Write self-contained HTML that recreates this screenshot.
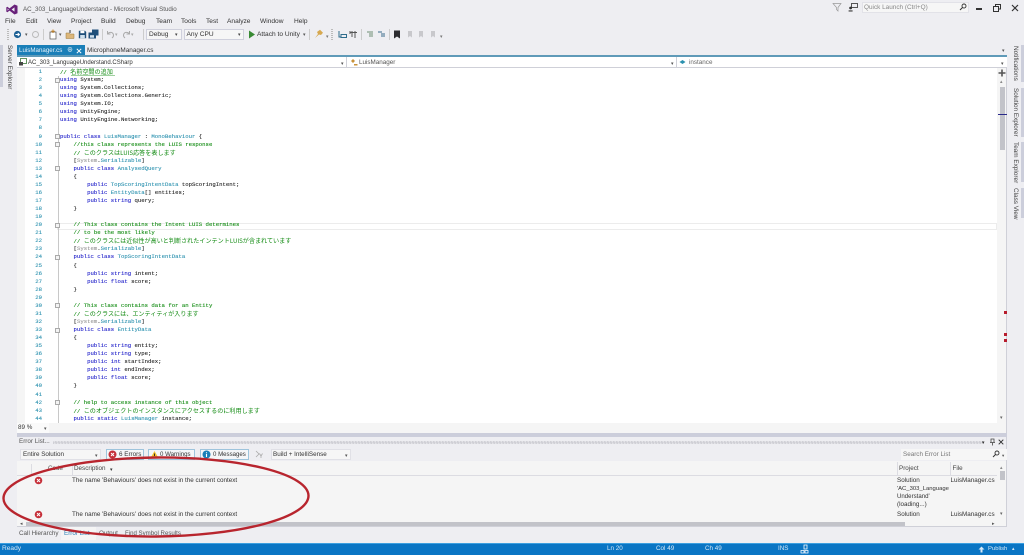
<!DOCTYPE html>
<html><head><meta charset="utf-8"><style>
*{box-sizing:border-box}
html,body{margin:0;padding:0;width:1024px;height:555px;overflow:hidden;background:#eeeef2}
#r{position:absolute;left:0;top:0;width:1024px;height:555px;overflow:hidden;background:#eeeef2;font-family:"Liberation Sans","Noto Sans CJK JP",sans-serif;font-size:6.3px;color:#333;filter:blur(.38px)}
.t{position:absolute;white-space:nowrap;line-height:12px}
.m{font-size:6.6px}
.b{position:absolute}
.v{position:absolute;white-space:nowrap;writing-mode:vertical-rl;font-size:6.4px;color:#444;line-height:10px}
#code{position:absolute;left:0;top:68px;width:997px;font-family:"Liberation Mono","Noto Sans CJK JP",monospace;font-size:5.65px;color:#222;-webkit-text-stroke:.1px}
.l{position:relative;height:8.07px;line-height:8px;white-space:pre;padding-left:60px}
.l i{position:absolute;left:22px;width:20px;text-align:right;font-style:normal;color:#2b91af}
.k{color:#1a1ac8}.c{color:#108a10}.y{color:#2b91af}.g{color:#999}
.j{font-family:"Noto Sans CJK JP",sans-serif;font-size:6.1px;color:#108a10;-webkit-text-stroke:0}
.f{position:absolute;left:55px;width:5px;height:5px;border:.6px solid #aaa;background:#f4f4f4}
.tb{position:absolute;background:#f6f6f6;border:1px solid #cfd0dc;height:11px}
.btn{position:absolute;top:449px;height:11px;border:1px solid #9ec4dc;background:#f5f6f8}
</style></head><body><div id="r">

<!-- title -->
<svg class="b" style="left:6px;top:4px" width="12" height="11" viewBox="0 0 12 11"><path d="M8.5 0.5 L11.5 1.8 V9.2 L8.5 10.5 L3.5 6.6 L1.4 8.2 L0.3 7.6 V3.4 L1.4 2.8 L3.5 4.4 Z M8.5 3.4 L5.6 5.5 L8.5 7.6 Z M1.6 4.4 V6.6 L2.8 5.5 Z" fill="#68217a" fill-rule="evenodd"/></svg>
<div class="t" style="left:23px;top:3.500px;color:#555;font-size:6.2px">AC_303_LanguageUnderstand - Microsoft Visual Studio</div>
<svg class="b" style="left:832px;top:2px" width="10" height="10" viewBox="0 0 10 10"><path d="M1 1.5H9L6 5.500V9L4.500 7.500V5.500Z" fill="none" stroke="#999" stroke-width=".7"/></svg>
<svg class="b" style="left:848px;top:2px" width="10" height="10" viewBox="0 0 10 10"><rect x="3.500" y="1.500" width="6" height="4" fill="none" stroke="#444" stroke-width=".9"/><circle cx="2.600" cy="6" r="1.400" fill="#333"/><path d="M.6 9.500V8.400H4.600V9.500Z" fill="#333"/></svg>
<div class="b" style="left:862px;top:2px;width:107px;height:11px;background:#f6f6f6;border:1px solid #e2e2e8"></div>
<div class="t" style="left:864px;top:1.500px;color:#888;font-size:6.4px">Quick Launch (Ctrl+Q)</div>
<svg class="b" style="left:959px;top:3px" width="8" height="8" viewBox="0 0 8 8"><circle cx="5" cy="3" r="2" fill="none" stroke="#333" stroke-width=".9"/><path d="M3.500 4.500L1 7" stroke="#333" stroke-width="1"/></svg>
<div class="b" style="left:976px;top:8px;width:6px;height:1.600px;background:#333"></div>
<svg class="b" style="left:993px;top:4px" width="8" height="8" viewBox="0 0 8 8"><path d="M2.500 2.500V.5H7.500V5H5.500M.5 2.500H5.500V7.500H.5Z" fill="none" stroke="#333"/></svg>
<svg class="b" style="left:1011px;top:4px" width="8" height="8" viewBox="0 0 8 8"><path d="M1 1L7 7M7 1L1 7" stroke="#333" stroke-width="1.200"/></svg>

<!-- menu -->
<div class="t m" style="left:5px;top:16px">File</div>
<div class="t m" style="left:26px;top:16px">Edit</div>
<div class="t m" style="left:47px;top:16px">View</div>
<div class="t m" style="left:71px;top:16px">Project</div>
<div class="t m" style="left:101px;top:16px">Build</div>
<div class="t m" style="left:126px;top:16px">Debug</div>
<div class="t m" style="left:156px;top:16px">Team</div>
<div class="t m" style="left:181px;top:16px">Tools</div>
<div class="t m" style="left:206px;top:16px">Test</div>
<div class="t m" style="left:227px;top:16px">Analyze</div>
<div class="t m" style="left:260px;top:16px">Window</div>
<div class="t m" style="left:294px;top:16px">Help</div>

<!-- toolbar -->
<div class="b" style="left:7px;top:29px;width:2px;height:11px;background:repeating-linear-gradient(#bbb 0 1px,transparent 1px 2px)"></div>
<svg class="b" style="left:13px;top:30px" width="9" height="9" viewBox="0 0 9 9"><circle cx="4.500" cy="4.500" r="3.600" fill="#1c5f94"/><path d="M2.500 4.500H6.500M4.700 3L6.500 4.500L4.700 6" stroke="#fff" fill="none" stroke-width=".9"/></svg>
<div class="t" style="left:25px;top:29px;font-size:5px;color:#555">▾</div>
<svg class="b" style="left:31px;top:30px" width="9" height="9" viewBox="0 0 9 9"><circle cx="4.500" cy="4.500" r="3" fill="none" stroke="#bbb"/></svg>
<div class="b" style="left:43px;top:29px;width:1px;height:11px;background:#ccc"></div>
<svg class="b" style="left:48px;top:29px" width="10" height="11" viewBox="0 0 10 11"><rect x="2" y="3" width="6" height="7" fill="#fff" stroke="#555" stroke-width=".7"/><path d="M5 .5V4M3.200 2.200H6.800" stroke="#c27d1a" stroke-width=".9"/></svg>
<div class="t" style="left:59px;top:29px;font-size:5px;color:#555">▾</div>
<svg class="b" style="left:65px;top:29px" width="10" height="11" viewBox="0 0 10 11"><path d="M1 4H4L5 5H9V9.500H1Z" fill="#dcb67a" stroke="#9a7a3a" stroke-width=".5"/><path d="M5 1V4" stroke="#333"/></svg>
<svg class="b" style="left:78px;top:30px" width="9" height="9" viewBox="0 0 9 9"><path d="M.8.8H7L8.200 2V8.200H.8Z" fill="#1e4e79"/><rect x="2.400" y=".8" width="4" height="2.400" fill="#fff"/><rect x="2.200" y="5" width="4.600" height="3.200" fill="#cfe0ee"/></svg>
<svg class="b" style="left:88px;top:29px" width="11" height="10" viewBox="0 0 11 10"><path d="M4 .5H10.500V6.500H8V9.500H.5V3.500H4Z" fill="#1e4e79"/><rect x="2" y="6.200" width="4" height="2.500" fill="#cfe0ee"/></svg>
<div class="b" style="left:102px;top:29px;width:1px;height:11px;background:#ccc"></div>
<svg class="b" style="left:106px;top:30px" width="9" height="9" viewBox="0 0 9 9"><path d="M1.500 1V4H4.500M1.800 3.800C3.500 1.500 7 2 7.500 5C7.600 6.200 7 7.200 6 8" fill="none" stroke="#aaa"/></svg>
<div class="t" style="left:115px;top:29px;font-size:5px;color:#aaa">▾</div>
<svg class="b" style="left:122px;top:30px" width="9" height="9" viewBox="0 0 9 9"><path d="M7.500 1V4H4.500M7.200 3.800C5.500 1.500 2 2 1.500 5C1.400 6.200 2 7.200 3 8" fill="none" stroke="#aaa"/></svg>
<div class="t" style="left:131px;top:29px;font-size:5px;color:#aaa">▾</div>
<div class="b" style="left:143px;top:29px;width:1px;height:11px;background:#ccc"></div>
<div class="tb" style="left:146px;top:29px;width:36px"></div>
<div class="t m" style="left:149px;top:28.500px">Debug</div>
<div class="t" style="left:175px;top:29px;font-size:5px;color:#444">▾</div>
<div class="tb" style="left:184px;top:29px;width:60px"></div>
<div class="t m" style="left:186.500px;top:28.500px">Any CPU</div>
<div class="t" style="left:238px;top:29px;font-size:5px;color:#444">▾</div>
<svg class="b" style="left:248px;top:30px" width="8" height="9" viewBox="0 0 8 9"><path d="M1 .5L7 4.500L1 8.500Z" fill="#388a34"/></svg>
<div class="t m" style="left:257px;top:28.500px">Attach to Unity</div>
<div class="t" style="left:303px;top:29px;font-size:5px;color:#555">▾</div>
<div class="b" style="left:309px;top:29px;width:1px;height:11px;background:#ccc"></div>
<svg class="b" style="left:314px;top:29px" width="10" height="10" viewBox="0 0 10 10"><path d="M1 9L4 5L3 3L6 .8L9 3.800L7 6L5 5.500Z" fill="#d6a84f"/></svg>
<div class="t" style="left:326px;top:31px;font-size:5px;color:#777">▾</div>
<div class="b" style="left:331px;top:29px;width:2px;height:11px;background:repeating-linear-gradient(#bbb 0 1px,transparent 1px 2px)"></div>
<svg class="b" style="left:338px;top:30px" width="9" height="9" viewBox="0 0 9 9"><path d="M1 1V7H3M3 4.500H8.500V7.500H3Z" fill="none" stroke="#2e6c8c"/></svg>
<svg class="b" style="left:349px;top:30px" width="9" height="9" viewBox="0 0 9 9"><path d="M1 2.500H8M3 1V7M6 1V8M1 1V4" fill="none" stroke="#555" stroke-width="1"/></svg>
<div class="b" style="left:361px;top:29px;width:1px;height:11px;background:#ccc"></div>
<svg class="b" style="left:366px;top:30px" width="9" height="9" viewBox="0 0 9 9"><path d="M1 2H7M3 4H7M3 6H7" stroke="#6e8e74"/></svg>
<svg class="b" style="left:377px;top:30px" width="9" height="9" viewBox="0 0 9 9"><path d="M1 2H5M4 4H8M4 6H8" stroke="#3a6a8a"/></svg>
<div class="b" style="left:389px;top:29px;width:1px;height:11px;background:#ccc"></div>
<svg class="b" style="left:393px;top:30px" width="8" height="9" viewBox="0 0 8 9"><path d="M1 .5H7V8.500L4 6.500L1 8.500Z" fill="#2c2c30"/></svg>
<svg class="b" style="left:405px;top:30px" width="8" height="9" viewBox="0 0 8 9"><path d="M3 1H7V7.500L5 6L3 7.500ZM1 3H3" fill="#c8c8cc"/></svg>
<svg class="b" style="left:416px;top:30px" width="8" height="9" viewBox="0 0 8 9"><path d="M3 1H7V7.500L5 6L3 7.500ZM1 3H3" fill="#c8c8cc"/></svg>
<svg class="b" style="left:428px;top:30px" width="8" height="9" viewBox="0 0 8 9"><path d="M3 1H7V7.500L5 6L3 7.500ZM1 3H3" fill="#c8c8cc"/></svg>
<div class="t" style="left:440px;top:31px;font-size:5px;color:#777">▾</div>

<!-- left strip -->
<div class="b" style="left:0;top:45px;width:3px;height:42px;background:#cccedb"></div>
<div class="v" style="left:4px;top:45px">Server Explorer</div>

<!-- tabs -->
<div class="b" style="left:17px;top:45px;width:68px;height:11px;background:#1a7fb8"></div>
<div class="t" style="left:19px;top:44.500px;color:#e8f3fa;font-size:6.2px">LuisManager.cs</div>
<div class="t" style="left:67px;top:44.500px;color:#fff;font-size:6px">⊕</div>
<svg class="b" style="left:76px;top:48px" width="6" height="6" viewBox="0 0 6 6"><path d="M.8.8L5.200 5.200M5.200.8L.8 5.200" stroke="#fff"/></svg>
<div class="t" style="left:87px;top:44.500px;color:#333;font-size:6.4px">MicrophoneManager.cs</div>
<div class="t" style="left:1002px;top:45px;font-size:5px;color:#555">▾</div>
<div class="b" style="left:17px;top:55px;width:990px;height:2px;background:#5f9ab8"></div>

<!-- nav bar -->
<div class="b" style="left:17px;top:57px;width:990px;height:11px;background:#fff;border-bottom:1px solid #cfd0d8"></div>
<svg class="b" style="left:19px;top:58px" width="8" height="8" viewBox="0 0 8 8"><rect x="1.500" y=".5" width="6" height="5" fill="#fff" stroke="#3a7a3a" stroke-width=".8"/><rect y="4" width="4" height="3.500" fill="#444"/></svg>
<div class="t" style="left:28px;top:56.500px;font-size:6px">AC_303_LanguageUnderstand.CSharp</div>
<div class="t" style="left:341px;top:58px;font-size:5px;color:#555">▾</div>
<div class="b" style="left:346px;top:57px;width:1px;height:11px;background:#cfd0d8"></div>
<svg class="b" style="left:350px;top:58px" width="8" height="8" viewBox="0 0 8 8"><path d="M1 3L3 1L5 3L3 5ZM4 6H7.500V7.500H4Z" fill="#c8923a"/></svg>
<div class="t" style="left:359px;top:56.500px;color:#555">LuisManager</div>
<div class="t" style="left:671px;top:58px;font-size:5px;color:#555">▾</div>
<div class="b" style="left:676px;top:57px;width:1px;height:11px;background:#cfd0d8"></div>
<svg class="b" style="left:679px;top:58px" width="7" height="8" viewBox="0 0 7 8"><path d="M.5 4L3.500 2L6.500 4L3.500 6Z" fill="#2b91af"/></svg>
<div class="t" style="left:689px;top:56.500px;color:#666">instance</div>
<div class="t" style="left:1001px;top:58px;font-size:5px;color:#555">▾</div>

<!-- editor -->
<div class="b" style="left:17px;top:68px;width:8px;height:355px;background:#f5f5f5"></div>
<div class="b" style="left:25px;top:68px;width:972px;height:355px;background:#fff"></div>
<div class="b" style="left:57px;top:222.500px;width:940px;height:7px;border:1px solid #ececec"></div>
<div class="b" style="left:71px;top:74.500px;width:44px;height:1px;background:#9fd09f"></div>
<div class="b" style="left:57.500px;top:76px;width:.6px;height:347px;background:#c8c8c8"></div>
<div class="f" style="top:77.500px"></div><div class="f" style="top:134px"></div><div class="f" style="top:142px"></div><div class="f" style="top:166px"></div><div class="f" style="top:223px"></div><div class="f" style="top:255px"></div><div class="f" style="top:303px"></div><div class="f" style="top:328px"></div><div class="f" style="top:400px"></div>

<div id="code">
<div class="l"><i>1</i><span class="c">// </span><span class="j">名前空間の追加</span></div>
<div class="l"><i>2</i><span class="k">using</span> System;</div>
<div class="l"><i>3</i><span class="k">using</span> System.Collections;</div>
<div class="l"><i>4</i><span class="k">using</span> System.Collections.Generic;</div>
<div class="l"><i>5</i><span class="k">using</span> System.IO;</div>
<div class="l"><i>6</i><span class="k">using</span> UnityEngine;</div>
<div class="l"><i>7</i><span class="k">using</span> UnityEngine.Networking;</div>
<div class="l"><i>8</i></div>
<div class="l"><i>9</i><span class="k">public class</span> <span class="y">LuisManager</span> : <span class="y">MonoBehaviour</span> {</div>
<div class="l"><i>10</i>    <span class="c">//this class represents the LUIS response</span></div>
<div class="l"><i>11</i>    <span class="c">// </span><span class="j">このクラスはLUIS応答を表します</span></div>
<div class="l"><i>12</i>    [<span class="g">System</span>.<span class="y">Serializable</span>]</div>
<div class="l"><i>13</i>    <span class="k">public class</span> <span class="y">AnalysedQuery</span></div>
<div class="l"><i>14</i>    {</div>
<div class="l"><i>15</i>        <span class="k">public</span> <span class="y">TopScoringIntentData</span> topScoringIntent;</div>
<div class="l"><i>16</i>        <span class="k">public</span> <span class="y">EntityData</span>[] entities;</div>
<div class="l"><i>17</i>        <span class="k">public string</span> query;</div>
<div class="l"><i>18</i>    }</div>
<div class="l"><i>19</i></div>
<div class="l"><i>20</i>    <span class="c">// This class contains the Intent LUIS determines</span></div>
<div class="l"><i>21</i>    <span class="c">// to be the most likely</span></div>
<div class="l"><i>22</i>    <span class="c">// </span><span class="j">このクラスには近似性が高いと判断されたインテントLUISが含まれています</span></div>
<div class="l"><i>23</i>    [<span class="g">System</span>.<span class="y">Serializable</span>]</div>
<div class="l"><i>24</i>    <span class="k">public class</span> <span class="y">TopScoringIntentData</span></div>
<div class="l"><i>25</i>    {</div>
<div class="l"><i>26</i>        <span class="k">public string</span> intent;</div>
<div class="l"><i>27</i>        <span class="k">public float</span> score;</div>
<div class="l"><i>28</i>    }</div>
<div class="l"><i>29</i></div>
<div class="l"><i>30</i>    <span class="c">// This class contains data for an Entity</span></div>
<div class="l"><i>31</i>    <span class="c">// </span><span class="j">このクラスには、エンティティが入ります</span></div>
<div class="l"><i>32</i>    [<span class="g">System</span>.<span class="y">Serializable</span>]</div>
<div class="l"><i>33</i>    <span class="k">public class</span> <span class="y">EntityData</span></div>
<div class="l"><i>34</i>    {</div>
<div class="l"><i>35</i>        <span class="k">public string</span> entity;</div>
<div class="l"><i>36</i>        <span class="k">public string</span> type;</div>
<div class="l"><i>37</i>        <span class="k">public int</span> startIndex;</div>
<div class="l"><i>38</i>        <span class="k">public int</span> endIndex;</div>
<div class="l"><i>39</i>        <span class="k">public float</span> score;</div>
<div class="l"><i>40</i>    }</div>
<div class="l"><i>41</i></div>
<div class="l"><i>42</i>    <span class="c">// help to access instance of this object</span></div>
<div class="l"><i>43</i>    <span class="c">// </span><span class="j">このオブジェクトのインスタンスにアクセスするのに利用します</span></div>
<div class="l"><i>44</i>    <span class="k">public static</span> <span class="y">LuisManager</span> instance;</div>
</div>

<!-- zoom bar -->
<div class="b" style="left:17px;top:423px;width:980px;height:10px;background:#f5f5f5"></div>
<div class="b" style="left:17px;top:423px;width:32px;height:10px;background:#fafafa"></div>
<div class="t" style="left:18px;top:422px">89 %</div>
<div class="t" style="left:44px;top:423px;font-size:5px;color:#555">▾</div>

<!-- vertical scrollbar -->
<div class="b" style="left:997px;top:68px;width:10px;height:365px;background:#f5f5f5;border-right:1px solid #cfd0d8"></div>
<svg class="b" style="left:998px;top:69px" width="8" height="8" viewBox="0 0 8 8"><path d="M4 .5V7.500M.5 4H7.500" stroke="#555" stroke-width="1.600"/></svg>
<div class="t" style="left:1000px;top:76px;font-size:5px;color:#888">▴</div>
<div class="b" style="left:1000px;top:87px;width:5px;height:63px;background:#c2c3c9"></div>
<div class="b" style="left:998px;top:114px;width:9px;height:1.300px;background:#2a2a8a"></div>
<div class="b" style="left:1004px;top:311px;width:3px;height:3px;background:#b71c2c"></div>
<div class="b" style="left:1004px;top:333px;width:3px;height:3px;background:#b71c2c"></div>
<div class="b" style="left:1004px;top:339px;width:3px;height:3px;background:#b71c2c"></div>
<div class="t" style="left:1000px;top:412px;font-size:5px;color:#666">▾</div>

<!-- right strip -->
<div class="b" style="left:1021px;top:45px;width:3px;height:37px;background:#cccedb"></div>
<div class="b" style="left:1021px;top:88px;width:3px;height:49px;background:#cccedb"></div>
<div class="b" style="left:1021px;top:142px;width:3px;height:40px;background:#cccedb"></div>
<div class="b" style="left:1021px;top:188px;width:3px;height:30px;background:#cccedb"></div>
<div class="v" style="left:1010px;top:46px">Notifications</div>
<div class="v" style="left:1010px;top:88px">Solution Explorer</div>
<div class="v" style="left:1010px;top:142px">Team Explorer</div>
<div class="v" style="left:1010px;top:188px">Class View</div>

<!-- splitter / error list -->
<div class="b" style="left:17px;top:432.500px;width:990px;height:4.500px;background:#cccedb"></div>
<div class="b" style="left:17px;top:437px;width:990px;height:90px;background:#eeeef2;border-right:1px solid #cfd0d8"></div>
<div class="t" style="left:19px;top:436px;color:#555">Error List...</div>
<div class="b" style="left:53px;top:440.500px;width:930px;height:3px;background:repeating-conic-gradient(#c6c6cc 0 25%,#eeeef2 0 50%) 0 0/1.500px 1.500px"></div>
<div class="t" style="left:982px;top:437px;font-size:5px;color:#333">▾</div>
<svg class="b" style="left:989px;top:438px" width="7" height="8" viewBox="0 0 7 8"><path d="M2 1H5V4.500H2ZM1 4.500H6M3.500 4.500V7.500" fill="none" stroke="#444" stroke-width=".8"/></svg>
<svg class="b" style="left:998px;top:439px" width="6" height="6" viewBox="0 0 6 6"><path d="M.7.7L5.300 5.300M5.300.7L.7 5.300" stroke="#333" stroke-width="1"/></svg>

<div class="b" style="left:20px;top:449px;width:81px;height:11px;background:#f6f6f6;border:1px solid #e0e0e6"></div>
<div class="t" style="left:23px;top:449px">Entire Solution</div>
<div class="t" style="left:95px;top:450px;font-size:5px;color:#555">▾</div>

<div class="btn" style="left:106px;width:38px"></div>
<svg class="b" style="left:108px;top:450px" width="9" height="9" viewBox="0 0 9 9"><circle cx="4.500" cy="4.500" r="4" fill="#c6303a"/><path d="M3 3L6 6M6 3L3 6" stroke="#fff" stroke-width="1"/></svg>
<div class="t" style="left:119px;top:449px">6 Errors</div>
<div class="btn" style="left:148px;width:47px"></div>
<svg class="b" style="left:150px;top:450px" width="9" height="9" viewBox="0 0 9 9"><path d="M4.500 1L8.500 8H.5Z" fill="#f2c230"/><path d="M4.500 3.500V6" stroke="#222" stroke-width=".9"/></svg>
<div class="t" style="left:160px;top:449px;font-size:6.1px">0 Warnings</div>
<div class="btn" style="left:200px;width:49px"></div>
<svg class="b" style="left:202px;top:450px" width="9" height="9" viewBox="0 0 9 9"><circle cx="4.500" cy="4.500" r="4" fill="#1a7fb8"/><path d="M4.500 2.200V3.200M4.500 4V7" stroke="#fff" stroke-width="1.100"/></svg>
<div class="t" style="left:213px;top:449px;font-size:6.1px">0 Messages</div>
<svg class="b" style="left:255px;top:450px" width="9" height="9" viewBox="0 0 9 9"><path d="M1 1L4 4L1 7M7.500 3.500L6 6V8M4.500 3.500L6 6" fill="none" stroke="#aaa" stroke-width=".8"/></svg>
<div class="b" style="left:271px;top:449px;width:80px;height:11px;background:#f6f6f6;border:1px solid #e0e0e6"></div>
<div class="t" style="left:273px;top:449px">Build + IntelliSense</div>
<div class="t" style="left:345px;top:450px;font-size:5px;color:#555">▾</div>

<div class="b" style="left:901px;top:449px;width:106px;height:11px;background:#f6f6f6"></div>
<div class="t" style="left:903px;top:449px;color:#777">Search Error List</div>
<svg class="b" style="left:992px;top:450px" width="8" height="8" viewBox="0 0 8 8"><circle cx="5" cy="3" r="2" fill="none" stroke="#333" stroke-width=".9"/><path d="M3.500 4.500L1 7" stroke="#333" stroke-width="1"/></svg>
<div class="t" style="left:1002px;top:450px;font-size:4.500px;color:#555">▾</div>

<!-- header -->
<div class="b" style="left:17px;top:461px;width:990px;height:60px;background:#f5f5f5;border-right:1px solid #cfd0d8"></div>
<div class="b" style="left:17px;top:474.500px;width:980px;height:1px;background:#dcdce2"></div>
<div class="b" style="left:31px;top:464px;width:1px;height:11px;background:#dcdce2"></div>
<div class="b" style="left:72px;top:464px;width:1px;height:11px;background:#dcdce2"></div>
<div class="b" style="left:897px;top:462px;width:1px;height:13px;background:#dcdce2"></div>
<div class="b" style="left:950px;top:462px;width:1px;height:13px;background:#dcdce2"></div>
<div class="t" style="left:48px;top:463px;color:#555">Code</div>
<div class="t" style="left:74px;top:463px;color:#444">Description</div>
<div class="t" style="left:110px;top:464px;font-size:5px;color:#333">▾</div>
<div class="t" style="left:899px;top:463px;color:#444">Project</div>
<div class="t" style="left:952.500px;top:463px;color:#444">File</div>

<!-- rows -->
<svg class="b" style="left:34px;top:476px" width="9" height="9" viewBox="0 0 9 9"><circle cx="4.500" cy="4.500" r="3.800" fill="#c6303a"/><path d="M3 3L6 6M6 3L3 6" stroke="#fff" stroke-width="1"/></svg>
<svg class="b" style="left:34px;top:510px" width="9" height="9" viewBox="0 0 9 9"><circle cx="4.500" cy="4.500" r="3.800" fill="#c6303a"/><path d="M3 3L6 6M6 3L3 6" stroke="#fff" stroke-width="1"/></svg>
<div class="t" style="left:72px;top:475px;color:#333">The name 'Behaviours' does not exist in the current context</div>
<div class="t" style="left:72px;top:509px;color:#333">The name 'Behaviours' does not exist in the current context</div>
<div class="t" style="left:897px;top:475px;color:#333">Solution</div>
<div class="t" style="left:897px;top:483px;color:#333;font-size:5.9px">'AC_303_Language</div>
<div class="t" style="left:897px;top:491px;color:#333;font-size:6.1px">Understand'</div>
<div class="t" style="left:897px;top:499px;color:#333">(loading...)</div>
<div class="t" style="left:897px;top:509px;color:#333">Solution</div>
<div class="t" style="left:950.500px;top:475px;color:#333">LuisManager.cs</div>
<div class="t" style="left:950.500px;top:509px;color:#333">LuisManager.cs</div>
<div class="t" style="left:1000px;top:462px;font-size:5px;color:#888">▴</div>
<div class="b" style="left:1000px;top:471px;width:5px;height:9px;background:#c2c3c9"></div>
<div class="t" style="left:1000px;top:508px;font-size:5px;color:#666">▾</div>

<!-- h scroll -->
<div class="b" style="left:17px;top:521px;width:990px;height:6px;background:#f5f5f5;border-right:1px solid #cfd0d8;border-bottom:1px solid #cfd0d8"></div>
<div class="b" style="left:26px;top:521.500px;width:879px;height:4.500px;background:#c2c3c9"></div>
<div class="t" style="left:20px;top:518px;font-size:5px;color:#555">◂</div>
<div class="t" style="left:992px;top:518px;font-size:5px;color:#555">▸</div>

<!-- bottom tabs -->
<div class="b" style="left:61px;top:527px;width:35px;height:13px;background:#f5f5f5"></div>
<div class="t" style="left:19px;top:528px;color:#555">Call Hierarchy</div>
<div class="t" style="left:64px;top:528px;color:#2d7fb5">Error List</div>
<div class="t" style="left:99px;top:528px;color:#555">Output</div>
<div class="t" style="left:125px;top:528px;color:#555;font-size:6.1px">Find Symbol Results</div>

<!-- status bar -->
<div class="b" style="left:0;top:543px;width:1024px;height:12px;background:#0a75c4;border-top:1px solid #3b9fe0"></div>
<div class="t" style="left:2px;top:543px;color:#d5e8f6;font-size:6.6px">Ready</div>
<div class="t" style="left:607px;top:543px;color:#d5e8f6">Ln 20</div>
<div class="t" style="left:656px;top:543px;color:#d5e8f6">Col 49</div>
<div class="t" style="left:705px;top:543px;color:#d5e8f6">Ch 49</div>
<div class="t" style="left:778px;top:543px;color:#d5e8f6">INS</div>
<svg class="b" style="left:800px;top:544px" width="9" height="10" viewBox="0 0 9 10"><path d="M4 1H7V5H4ZM1 6.500H4V9H1ZM5 6.500H8V9H5Z" fill="none" stroke="#fff" stroke-width=".8"/></svg>
<svg class="b" style="left:978px;top:546px" width="7" height="7" viewBox="0 0 7 7"><path d="M3.500 .5L6.500 3.500H4.500V6.500H2.500V3.500H.5Z" fill="#d5e8f6"/></svg>
<div class="t" style="left:988px;top:543px;color:#d5e8f6;font-size:5.9px">Publish</div>
<div class="t" style="left:1012px;top:543px;font-size:5px;color:#d5e8f6">▴</div>

<!-- hand drawn ellipse -->
<svg class="b" style="left:0;top:450px" width="320" height="95" viewBox="0 0 320 95"><ellipse cx="156" cy="47" rx="152.500" ry="39.500" fill="none" stroke="#b8252e" stroke-width="2.400" transform="rotate(-.5 156 47)"/></svg>

</div></body></html>
